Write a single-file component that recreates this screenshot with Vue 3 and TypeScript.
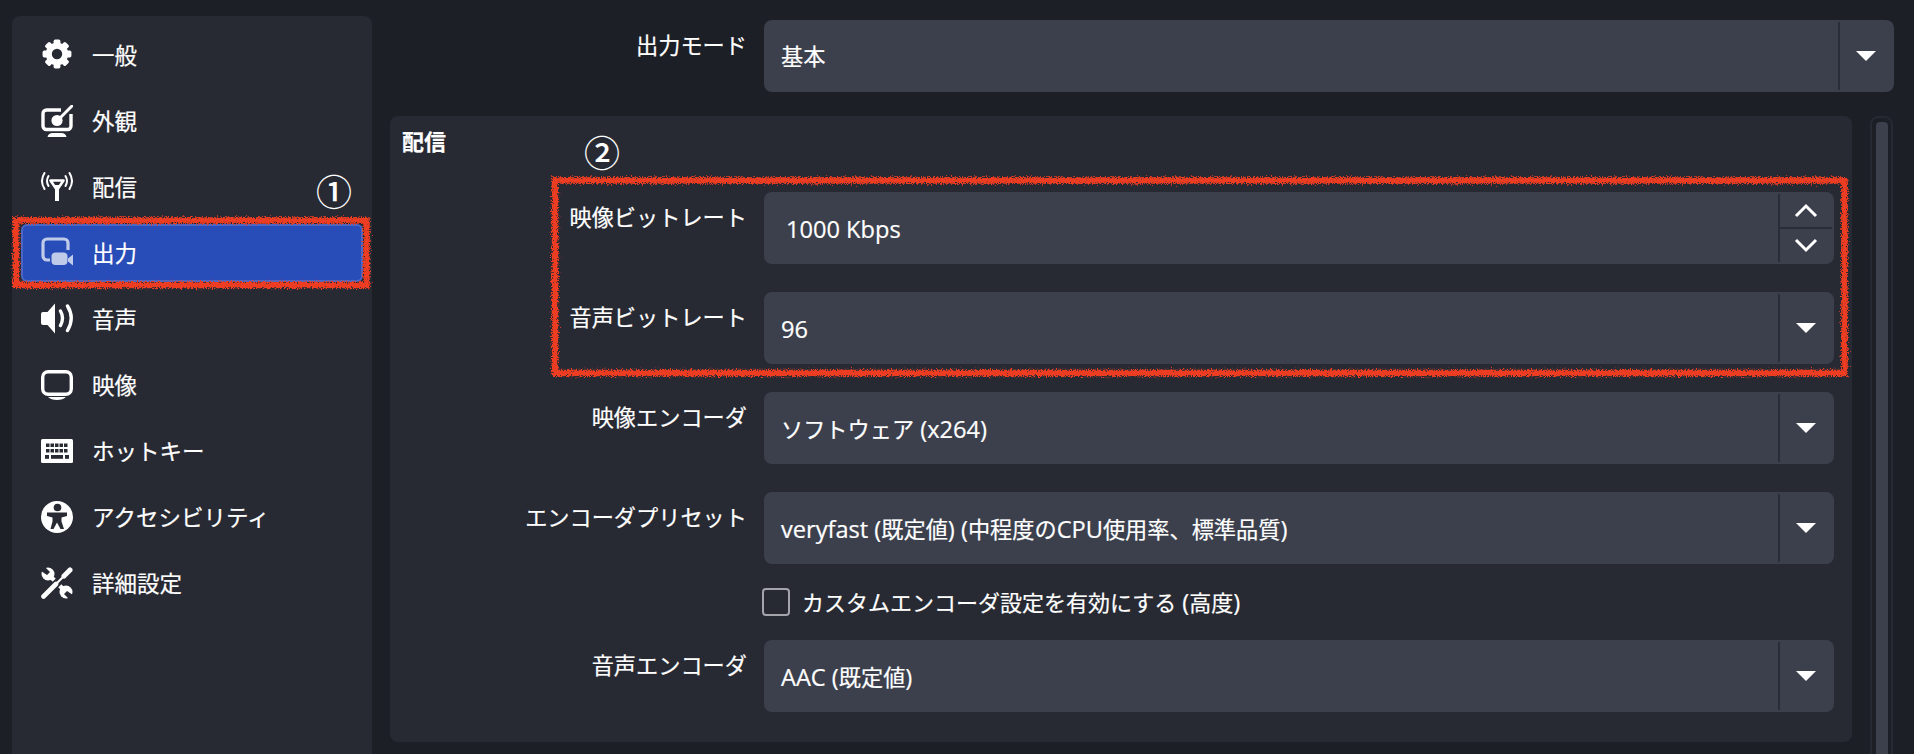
<script setup lang="ts">
const teeth = [0, 45, 90, 135, 180, 225, 270, 315]
const navRows = ['一般', '外観', '配信', '出力', '音声', '映像', 'ホットキー', 'アクセシビリティ', '詳細設定']
const keyRows = [
  { y: 4.5, h: 3.5, keys: [[5, 3.5], [9.5, 3.5], [14, 3.5], [18.5, 3.5], [23, 3.5]] },
  { y: 10, h: 3.5, keys: [[5, 3.5], [9.5, 3.5], [14, 3.5], [18.5, 3.5], [23, 3.5]] },
  { y: 16, h: 3.8, keys: [[4, 4], [10, 12], [24, 4]] },
]
const upperRows = [
  { label: '映像ビットレート', value: '1000 Kbps', spin: true },
  { label: '音声ビットレート', value: '96', spin: false },
  { label: '映像エンコーダ', value: 'ソフトウェア (x264)', spin: false },
  { label: 'エンコーダプリセット', value: 'veryfast (既定値) (中程度のCPU使用率、標準品質)', spin: false },
]
// Latin runs are set slightly larger than the CJK runs, as in the original font pairing.
function runs(s: string): { text: string; latin: boolean }[] {
  return s
    .split(/([\x20-\x7e]+)/)
    .filter((t) => t.length > 0)
    .map((t) => ({ text: t, latin: /^[\x20-\x7e]+$/.test(t) }))
}
</script>

<template>
  <div class="app">
    <nav class="sidebar">
      <div v-for="(name, i) in navRows" :key="name" class="nav-item" :class="{ active: i === 3 }">
        <svg class="icon" viewBox="0 0 32 32" width="32" height="32">
          <g v-if="i === 0" fill="#fff" transform="translate(0 -1)">
            <rect v-for="t in teeth" :key="t" x="12.6" y="1.6" width="6.8" height="6" rx="1.6" :transform="`rotate(${t} 16 16)`" />
            <circle cx="16" cy="16" r="8.2" fill="none" stroke="#fff" stroke-width="6" />
          </g>
          <g v-else-if="i === 1" fill="#fff">
            <path d="M20 5H5.5a3.5 3.5 0 0 0-3.5 3.5V21a3.5 3.5 0 0 0 3.5 3.5h21A3.5 3.5 0 0 0 30 21V9" fill="none" stroke="#fff" stroke-width="3.4" />
            <path d="M31 1 20 12" stroke="#fff" stroke-width="3" stroke-linecap="round" />
            <circle cx="16" cy="15.5" r="5.6" />
            <path d="M6.5 32c.8-3 2.5-4 5-4h9c2.500 0 4.200 1 5 4z" />
          </g>
          <g v-else-if="i === 2" fill="none" stroke="#fff">
            <path d="M9.500 9.500H22.500L16 19Z" stroke-width="2.600" stroke-linejoin="round" />
            <path d="M16 14V30" stroke-width="4" />
            <path d="M3.500 2Q-1.500 10 3.500 18M7.500 5Q4.500 10 7.500 15M28.500 2Q33.500 10 28.500 18M24.500 5Q27.500 10 24.500 15" stroke-width="2" stroke-linecap="round" />
          </g>
          <g v-else-if="i === 3" fill="#c0cbe9">
            <path d="M9 23H6a4 4 0 0 1-4-4V6a4 4 0 0 1 4-4h17a4 4 0 0 1 4 4v7" fill="none" stroke="#c0cbe9" stroke-width="3.200" />
            <rect x="10.500" y="15.500" width="16" height="12.500" rx="4" />
            <path d="M27 21.500 32 17.500V28.500L27 24.500Z" />
          </g>
          <g v-else-if="i === 4" fill="#fff">
            <path d="M0 11q0-2 2-2h4.500L14 .5v30L6.500 22H2q-2 0-2-2Z" />
            <path d="M19.500 8Q23.500 15 19.500 22.500M26.500 3Q34 15 26.500 27.500" fill="none" stroke="#fff" stroke-width="3.400" stroke-linecap="round" />
          </g>
          <g v-else-if="i === 5" fill="#fff">
            <rect x="1.700" y="2.700" width="28.600" height="22.600" rx="5.500" fill="none" stroke="#fff" stroke-width="3.400" />
            <path d="M7 28H25Q22 31 16 31Q10 31 7 28Z" />
          </g>
          <g v-else-if="i === 6">
            <rect y="4" width="32" height="24" rx="1.500" fill="#fff" />
            <g v-for="row in keyRows" :key="row.y">
              <rect v-for="k in row.keys" :key="k[0]" :x="k[0]" :y="row.y + 4" :width="k[1]" :height="row.h" fill="#282a33" />
            </g>
          </g>
          <g v-else-if="i === 7">
            <circle cx="16" cy="16" r="16" fill="#fff" />
            <circle cx="16.500" cy="6.500" r="3.800" fill="#282a33" />
            <path d="M6 11.500H26V15L20.500 16.500V20.500L23 28H19.500L16 21.500 12.500 28H9.500L11.500 20.500V16.500L6 15Z" fill="#282a33" />
          </g>
          <g v-else fill="#fff">
            <path d="M8 8 25 25" stroke="#fff" stroke-width="4.500" />
            <circle cx="7" cy="7" r="6.500" />
            <circle cx="25" cy="25" r="6.500" />
            <path d="M0 4 6 8 9 5 3-1H0ZM32 28 26 24 23 27 29 33H32Z" fill="#282a33" />
            <path d="M2 30 27 5" stroke="#282a33" stroke-width="8" />
            <path d="M2.500 29.500 15 17" stroke="#fff" stroke-width="4.600" stroke-linecap="round" />
            <path d="M15 17 24 8" stroke="#fff" stroke-width="2.200" />
            <path d="M23 9 29 3" stroke="#fff" stroke-width="5" stroke-linecap="round" />
          </g>
        </svg>
        <span class="nav-text">{{ name }}</span>
      </div>
      <span class="marker marker-one">①</span>
    </nav>

    <main class="main">
      <div class="row top-row">
        <div class="label">出力モード</div>
        <div class="combo wide">
          <span class="value">基本</span>
          <span class="sep"></span>
          <span class="handle"><i class="arrow"></i></span>
        </div>
      </div>

      <div class="panel-row">
        <section class="panel">
          <h2 class="title">配信</h2>
          <span class="marker marker-two">②</span>
          <div v-for="r in upperRows" :key="r.label" class="row form-row">
            <div class="label">{{ r.label }}</div>
            <div class="combo" :class="{ spinbox: r.spin }">
              <span class="value"><span v-for="(p, n) in runs(r.value)" :key="n" :class="{ latin: p.latin }">{{ p.text }}</span></span>
              <span class="sep"></span>
              <span v-if="r.spin" class="spin">
                <svg viewBox="0 0 24 16" width="24" height="16"><path d="M2 13 12 3 22 13" fill="none" stroke="#fff" stroke-width="3" /></svg>
                <svg viewBox="0 0 24 16" width="24" height="16"><path d="M2 3 12 13 22 3" fill="none" stroke="#fff" stroke-width="3" /></svg>
              </span>
              <span v-else class="handle"><i class="arrow"></i></span>
            </div>
          </div>
          <label class="check-row">
            <span class="checkbox"></span>
            <span><span v-for="(p, n) in runs('カスタムエンコーダ設定を有効にする (高度)')" :key="n" :class="{ latin: p.latin }">{{ p.text }}</span></span>
          </label>
          <div class="row after-check">
            <div class="label">音声エンコーダ</div>
            <div class="combo">
              <span class="value"><span v-for="(p, n) in runs('AAC (既定値)')" :key="n" :class="{ latin: p.latin }">{{ p.text }}</span></span>
              <span class="sep"></span>
              <span class="handle"><i class="arrow"></i></span>
            </div>
          </div>
        </section>
        <div class="scrollbar"><div class="thumb"></div></div>
      </div>
    </main>

    <svg class="scribbles" width="1914" height="754" viewBox="0 0 1914 754">
      <defs>
        <filter id="rough" filterUnits="userSpaceOnUse" x="0" y="0" width="1914" height="754">
          <feTurbulence type="fractalNoise" baseFrequency="0.8" numOctaves="3" seed="7" result="n" />
          <feDisplacementMap in="SourceGraphic" in2="n" scale="7" />
        </filter>
      </defs>
      <g filter="url(#rough)" fill="none" stroke="#ec3d20" stroke-width="6.500">
        <rect x="16" y="220.500" width="350.500" height="64.500" />
        <rect x="555" y="180.500" width="1289.500" height="192.500" />
      </g>
    </svg>
  </div>
</template>

<style>
html, body { margin: 0; background: #1d1f27; }
</style>

<style scoped>
.app {
  position: relative;
  display: flex;
  width: 1914px;
  height: 754px;
  overflow: hidden;
  background: #1d1f27;
  color: #fff;
  font-family: "Open Sans", "Noto Sans CJK JP", sans-serif;
  font-size: 22.2px;
  line-height: 30px;
  -webkit-text-stroke: 0.2px #fff;
}
.latin { font-size: 23.6px; }
.sidebar {
  position: relative;
  box-sizing: border-box;
  width: 360px;
  height: 760px;
  margin: 16px 0 0 12px;
  padding: 10px 9px;
  background: #282a33;
  border-radius: 8px;
  display: flex;
  flex-direction: column;
  gap: 8px;
  font-size: 22.5px;
}
.nav-item {
  box-sizing: border-box;
  display: flex;
  align-items: center;
  gap: 19px;
  height: 58px;
  padding-left: 19px;
  border-radius: 6px;
  border: 1px solid transparent;
}
.nav-item.active {
  background: #284cb8;
  border: 2px solid #4a67c6;
  padding-left: 18px;
}
.nav-text { padding-top: 2px; }
.icon { flex: none; }
.marker {
  position: absolute;
  font-size: 36px;
  line-height: 40px;
  font-weight: 500;
  font-family: "Noto Sans CJK JP", sans-serif;
  -webkit-text-stroke: 0;
}
.marker-one { left: 304px; top: 154px; }
.marker-two { left: 194px; top: 15px; }
.main {
  width: 1504px;
  margin-left: 18px;
  flex: none;
}
.row {
  display: flex;
  gap: 17px;
}
.top-row { margin-top: 20px; }
.label {
  width: 357px;
  flex: none;
  box-sizing: border-box;
  padding-top: 11px;
  text-align: right;
}
.combo {
  position: relative;
  box-sizing: border-box;
  width: 1070px;
  height: 72px;
  display: flex;
  align-items: center;
  padding: 2px;
  background: #3c404d;
  border-radius: 8px;
}
.combo.wide { width: 1130px; }
.value {
  flex: 1;
  padding: 2px 0 0 15px;
  white-space: nowrap;
}
.spinbox .value { padding-left: 20px; }
.sep {
  width: 2px;
  height: 68px;
  background: #2a2c37;
}
.handle {
  width: 52px;
  height: 68px;
  display: flex;
  align-items: center;
  justify-content: center;
}
.arrow {
  display: block;
  width: 0;
  height: 0;
  border-left: 10px solid transparent;
  border-right: 10px solid transparent;
  border-top: 10px solid #fff;
}
.spin {
  width: 52px;
  height: 68px;
  display: flex;
  flex-direction: column;
  align-items: center;
  justify-content: space-around;
  background: linear-gradient(#2a2c37, #2a2c37) center / 100% 2px no-repeat;
}
.panel-row {
  display: flex;
  gap: 18px;
  margin-top: 24px;
}
.panel {
  position: relative;
  box-sizing: border-box;
  width: 1462px;
  height: 626px;
  background: #282a33;
  border-radius: 8px;
  padding: 10px 0 0;
}
.title {
  margin: 0 0 36px 12px;
  font-size: 22px;
  line-height: 30px;
  font-weight: 700;
}
.form-row + .form-row { margin-top: 28px; }
.check-row {
  display: flex;
  align-items: center;
  gap: 12px;
  height: 28px;
  margin: 24px 0 0 372px;
  font-size: 22px;
}
.checkbox {
  box-sizing: border-box;
  width: 28px;
  height: 28px;
  border: 2px solid #a3a5ab;
  border-radius: 4px;
}
.after-check { margin-top: 24px; }
.scrollbar {
  box-sizing: border-box;
  width: 23px;
  height: 660px;
  padding: 4px;
  border: 2px solid #262932;
  border-radius: 8px;
}
.thumb {
  width: 12px;
  height: 100%;
  background: #3c404d;
  border-radius: 4px;
}
.scribbles {
  position: absolute;
  left: 0;
  top: 0;
  pointer-events: none;
}
</style>
